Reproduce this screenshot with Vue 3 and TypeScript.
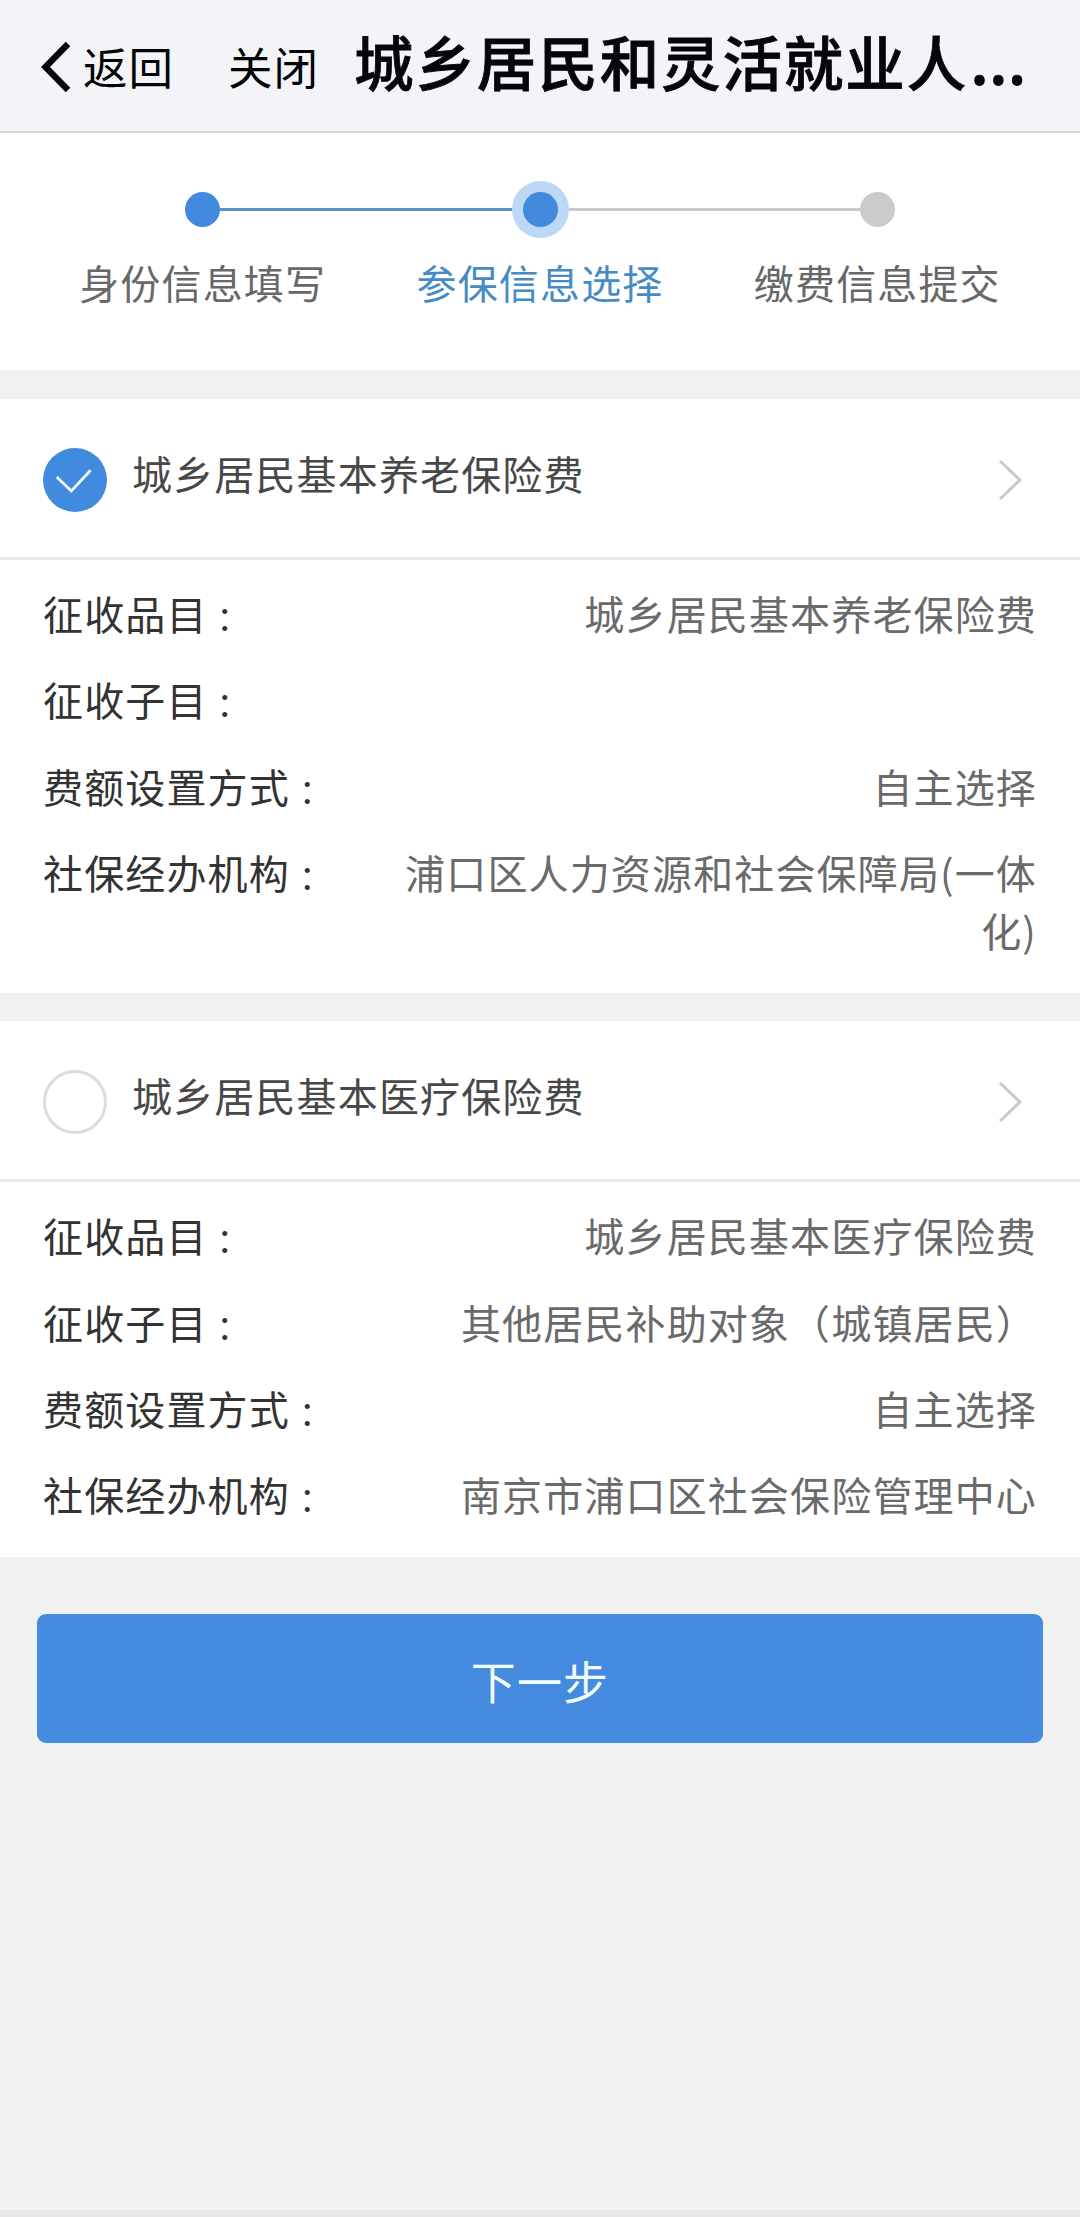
<script setup lang="ts">
interface Step {
  label: string
  state: 'done' | 'active' | 'todo'
}

interface Field {
  label: string
  value: string
}

interface Insurance {
  title: string
  checked: boolean
  fields: Field[]
}

const steps: Step[] = [
  { label: '身份信息填写', state: 'done' },
  { label: '参保信息选择', state: 'active' },
  { label: '缴费信息提交', state: 'todo' },
]

const insurances: Insurance[] = [
  {
    title: '城乡居民基本养老保险费',
    checked: true,
    fields: [
      { label: '征收品目', value: '城乡居民基本养老保险费' },
      { label: '征收子目', value: '' },
      { label: '费额设置方式', value: '自主选择' },
      { label: '社保经办机构', value: '浦口区人力资源和社会保障局(一体化)' },
    ],
  },
  {
    title: '城乡居民基本医疗保险费',
    checked: false,
    fields: [
      { label: '征收品目', value: '城乡居民基本医疗保险费' },
      { label: '征收子目', value: '其他居民补助对象（城镇居民）' },
      { label: '费额设置方式', value: '自主选择' },
      { label: '社保经办机构', value: '南京市浦口区社会保险管理中心' },
    ],
  },
]
</script>

<template>
  <div class="page">
    <header class="navbar">
      <svg class="back-icon" width="30" height="52" viewBox="0 0 30 52" fill="none">
        <path d="M27 3 L4.5 26 L27 49" stroke="#050608" stroke-width="6.4" />
      </svg>
      <span class="nav-link back">返回</span>
      <span class="nav-link close">关闭</span>
      <h1 class="title">城乡居民和灵活就业人<span class="dots">…</span></h1>
    </header>

    <section class="steps">
      <div v-for="step in steps" :key="step.label" class="step" :class="step.state">
        <div class="track">
          <i class="line left"></i>
          <span class="halo"><b class="dot"></b></span>
          <i class="line right"></i>
        </div>
        <div class="step-label">{{ step.label }}</div>
      </div>
    </section>

    <section v-for="item in insurances" :key="item.title" class="card">
      <div class="card-head">
        <span class="check" :class="{ on: item.checked }">
          <svg v-if="item.checked" width="64" height="64" viewBox="0 0 64 64" fill="none">
            <path d="M13.8 29 L28.3 43 L47.6 22.2" stroke="#effaff" stroke-width="2.8" />
          </svg>
        </span>
        <span class="card-title">{{ item.title }}</span>
        <svg class="arrow" width="26" height="44" viewBox="0 0 26 44" fill="none">
          <path d="M2 3 L22 22 L2 41" stroke="#c9c9c9" stroke-width="3" />
        </svg>
      </div>
      <div class="card-body">
        <div v-for="field in item.fields" :key="field.label" class="row">
          <span class="label">{{ field.label }}<span class="colon">：</span></span>
          <span class="value">{{ field.value }}</span>
        </div>
      </div>
    </section>

    <button class="next" type="button">下一步</button>
    <div class="bottom-edge"></div>
  </div>
</template>

<style>
body {
  margin: 0;
  background: #f1f1f1;
}
</style>

<style scoped>
.page {
  box-sizing: border-box;
  width: 1080px;
  height: 2217px;
  overflow: hidden;
  display: flex;
  flex-direction: column;
  background: #f1f1f1;
  font-family: 'Noto Sans CJK SC', sans-serif;
  font-size: 40px;
  letter-spacing: 1.15px;
}

.navbar {
  box-sizing: border-box;
  flex: none;
  height: 133px;
  border-bottom: 2px solid #d5d7da;
  background: #f3f4f7;
  color: #050608;
  display: flex;
  align-items: center;
  padding-left: 41px;
  white-space: nowrap;
}

.back-icon {
  flex: none;
  margin-top: 3px;
}

.nav-link {
  font-size: 44.5px;
  line-height: 64px;
  letter-spacing: 1px;
}

.back {
  margin-left: 12px;
}

.close {
  margin-left: 54px;
}

.title {
  margin: 0 0 0 35px;
  font-size: 59.5px;
  line-height: 80px;
  font-weight: 500;
  letter-spacing: 1.9px;
  padding-bottom: 11px;
  -webkit-text-stroke: 0.8px #050608;
}

.dots {
  margin-left: 2px;
  font-family: 'Noto Sans', sans-serif;
  font-size: 70px;
  line-height: 0;
  vertical-align: 1px;
}

.steps {
  flex: none;
  height: 237px;
  background: #fff;
  display: flex;
  padding: 0 34px;
  margin-bottom: 29px;
  box-sizing: border-box;
  padding-top: 48px;
}

.step {
  flex: 1;
}

.track {
  height: 57px;
  display: flex;
  align-items: center;
}

.line {
  flex: 1;
  height: 3px;
  background: #c9caca;
}

.step.done .line.right,
.step.active .line.left {
  background: #5a92c4;
}

.step:first-child .line.left,
.step:last-child .line.right {
  background: transparent;
}

.halo {
  width: 35px;
  height: 57px;
  display: flex;
  align-items: center;
  justify-content: center;
}

.dot {
  flex: none;
  width: 35px;
  height: 35px;
  border-radius: 50%;
  background: #428add;
}

.step.active .halo {
  width: 57px;
  border-radius: 50%;
  background: #bdd8f4;
}

.step.todo .dot {
  background: #cbcbcb;
}

.step-label {
  margin-top: 15px;
  text-align: center;
  line-height: 58px;
  color: #686868;
}

.step.active .step-label {
  color: #468bc6;
}

.card {
  flex: none;
  background: #fff;
  margin-bottom: 28.3px;
}

.card-head {
  box-sizing: border-box;
  height: 161px;
  border-bottom: 3px solid #e9e9e9;
  display: flex;
  align-items: center;
  padding: 4px 56px 0 43px;
}

.check {
  box-sizing: border-box;
  flex: none;
  width: 64px;
  height: 64px;
  border: 3px solid #dcdcdc;
  border-radius: 50%;
}

.check.on {
  border: none;
  background: #428add;
}

.check svg {
  display: block;
}

.card-title {
  flex: 1;
  margin-left: 25px;
  line-height: 58px;
  padding-bottom: 15px;
  color: #484848;
}

.arrow {
  flex: none;
}

.card-body {
  padding: 24px 43px 33px;
  display: flex;
  flex-direction: column;
  gap: 27.7px;
}

.row {
  display: flex;
  justify-content: space-between;
  line-height: 58.6px;
}

.label {
  color: #333;
  white-space: nowrap;
}

.colon {
  margin-left: 9px;
  font-size: 33px;
  line-height: 0;
}

.value {
  max-width: 645px;
  text-align: right;
  color: #6a6a6a;
}

.next {
  flex: none;
  margin: 29.4px 37px 0;
  height: 129px;
  border: none;
  border-radius: 9px;
  background: #448adf;
  color: #f2fcff;
  font-family: inherit;
  font-size: 45px;
  letter-spacing: 1.2px;
  padding: 3px 0 0;
}

.bottom-edge {
  margin-top: auto;
  height: 7px;
  background: #e7e7e7;
}
</style>
